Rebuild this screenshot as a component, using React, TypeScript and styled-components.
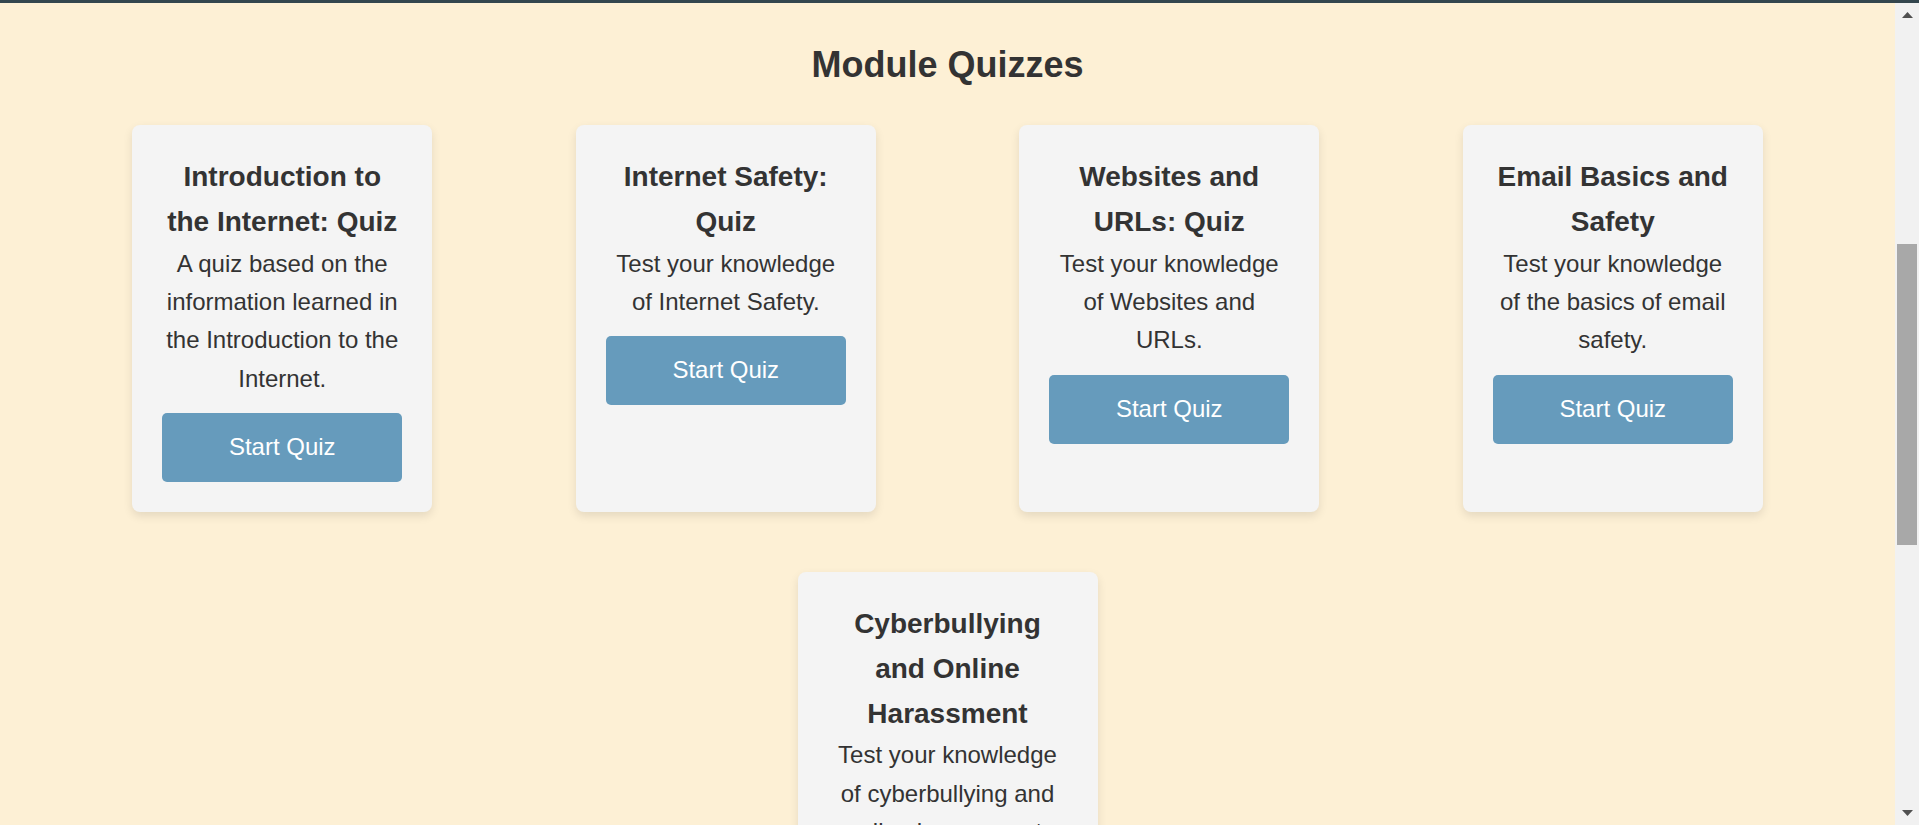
import React from "react";
import styled, { createGlobalStyle } from "styled-components";

const GlobalStyle = createGlobalStyle`
  html, body {
    margin: 0;
    padding: 0;
    height: 100%;
    overflow: hidden;
  }
  body {
    font-family: "Liberation Sans", Arial, sans-serif;
    background: #fdf0d5;
    color: #333;
  }
  #root {
    height: 100%;
  }
`;

const Frame = styled.div`
  display: flex;
  flex-direction: column;
  height: 100vh;
`;

const TopEdge = styled.div`
  height: 3px;
  flex: 0 0 3px;
  background: #33464e;
`;

const Viewport = styled.div`
  display: flex;
  flex: 1;
  min-height: 0;
`;

const Main = styled.main`
  flex: 1;
  min-width: 0;
  overflow: hidden;
  background: #fdf0d5;
`;

const Section = styled.section`
  display: flex;
  flex-direction: column;
  align-items: center;
`;

const Heading = styled.h2`
  margin: 40px 0 39px;
  font-size: 36px;
  line-height: 43px;
  font-weight: 700;
  color: #333;
  text-align: center;
`;

const Grid = styled.div`
  display: flex;
  flex-wrap: wrap;
  justify-content: center;
  gap: 60px 143.5px;
  width: 100%;
`;

const Card = styled.article`
  box-sizing: border-box;
  width: 300px;
  padding: 30px;
  background: #f4f4f4;
  border-radius: 8px;
  box-shadow: 0 4px 10px rgba(0, 0, 0, 0.1);
  text-align: center;
`;

const CardTitle = styled.h3`
  margin: 0;
  font-size: 28px;
  line-height: 1.6;
  font-weight: 700;
  color: #333;
`;

const CardText = styled.p`
  margin: 0 0 15px;
  font-size: 24px;
  line-height: 1.6;
  color: #333;
`;

const StartButton = styled.button`
  display: block;
  box-sizing: border-box;
  width: 100%;
  padding: 20px;
  border: none;
  border-radius: 5px;
  background: #669bbc;
  color: #fff;
  font-family: "Liberation Sans", Arial, sans-serif;
  font-size: 24px;
  line-height: 1.2;
  cursor: pointer;
`;

const ScrollTrack = styled.div`
  flex: 0 0 24px;
  width: 24px;
  display: flex;
  flex-direction: column;
  align-items: center;
  background: #f1f1f1;
`;

const ArrowButton = styled.div<{ $down?: boolean }>`
  flex: 0 0 24px;
  height: 24px;
  width: 24px;
  display: flex;
  align-items: center;
  justify-content: center;
  margin-top: ${(p) => (p.$down ? "auto" : "0")};
`;

const Thumb = styled.div`
  width: 20px;
  height: 301px;
  margin-top: 217px;
  background: #a8a8a8;
`;

const Arrow = ({ down }: { down?: boolean }) => (
  <svg width="11" height="6" viewBox="0 0 11 6" aria-hidden="true">
    {down ? (
      <polygon points="0,0 11,0 5.5,6" fill="#505050" />
    ) : (
      <polygon points="0,6 11,6 5.5,0" fill="#505050" />
    )}
  </svg>
);

type Quiz = { title: string; text: string };

const quizzes: Quiz[] = [
  {
    title: "Introduction to the Internet: Quiz",
    text: "A quiz based on the information learned in the Introduction to the Internet.",
  },
  {
    title: "Internet Safety: Quiz",
    text: "Test your knowledge of Internet Safety.",
  },
  {
    title: "Websites and URLs: Quiz",
    text: "Test your knowledge of Websites and URLs.",
  },
  {
    title: "Email Basics and Safety",
    text: "Test your knowledge of the basics of email safety.",
  },
  {
    title: "Cyberbullying and Online Harassment",
    text: "Test your knowledge of cyberbullying and online harassment.",
  },
];

export default function App() {
  return (
    <>
      <GlobalStyle />
      <Frame>
        <TopEdge />
        <Viewport>
          <Main>
            <Section>
              <Heading>Module Quizzes</Heading>
              <Grid>
                {quizzes.map((q) => (
                  <Card key={q.title}>
                    <CardTitle>{q.title}</CardTitle>
                    <CardText>{q.text}</CardText>
                    <StartButton type="button">Start Quiz</StartButton>
                  </Card>
                ))}
              </Grid>
            </Section>
          </Main>
          <ScrollTrack>
            <ArrowButton>
              <Arrow />
            </ArrowButton>
            <Thumb />
            <ArrowButton $down>
              <Arrow down />
            </ArrowButton>
          </ScrollTrack>
        </Viewport>
      </Frame>
    </>
  );
}
